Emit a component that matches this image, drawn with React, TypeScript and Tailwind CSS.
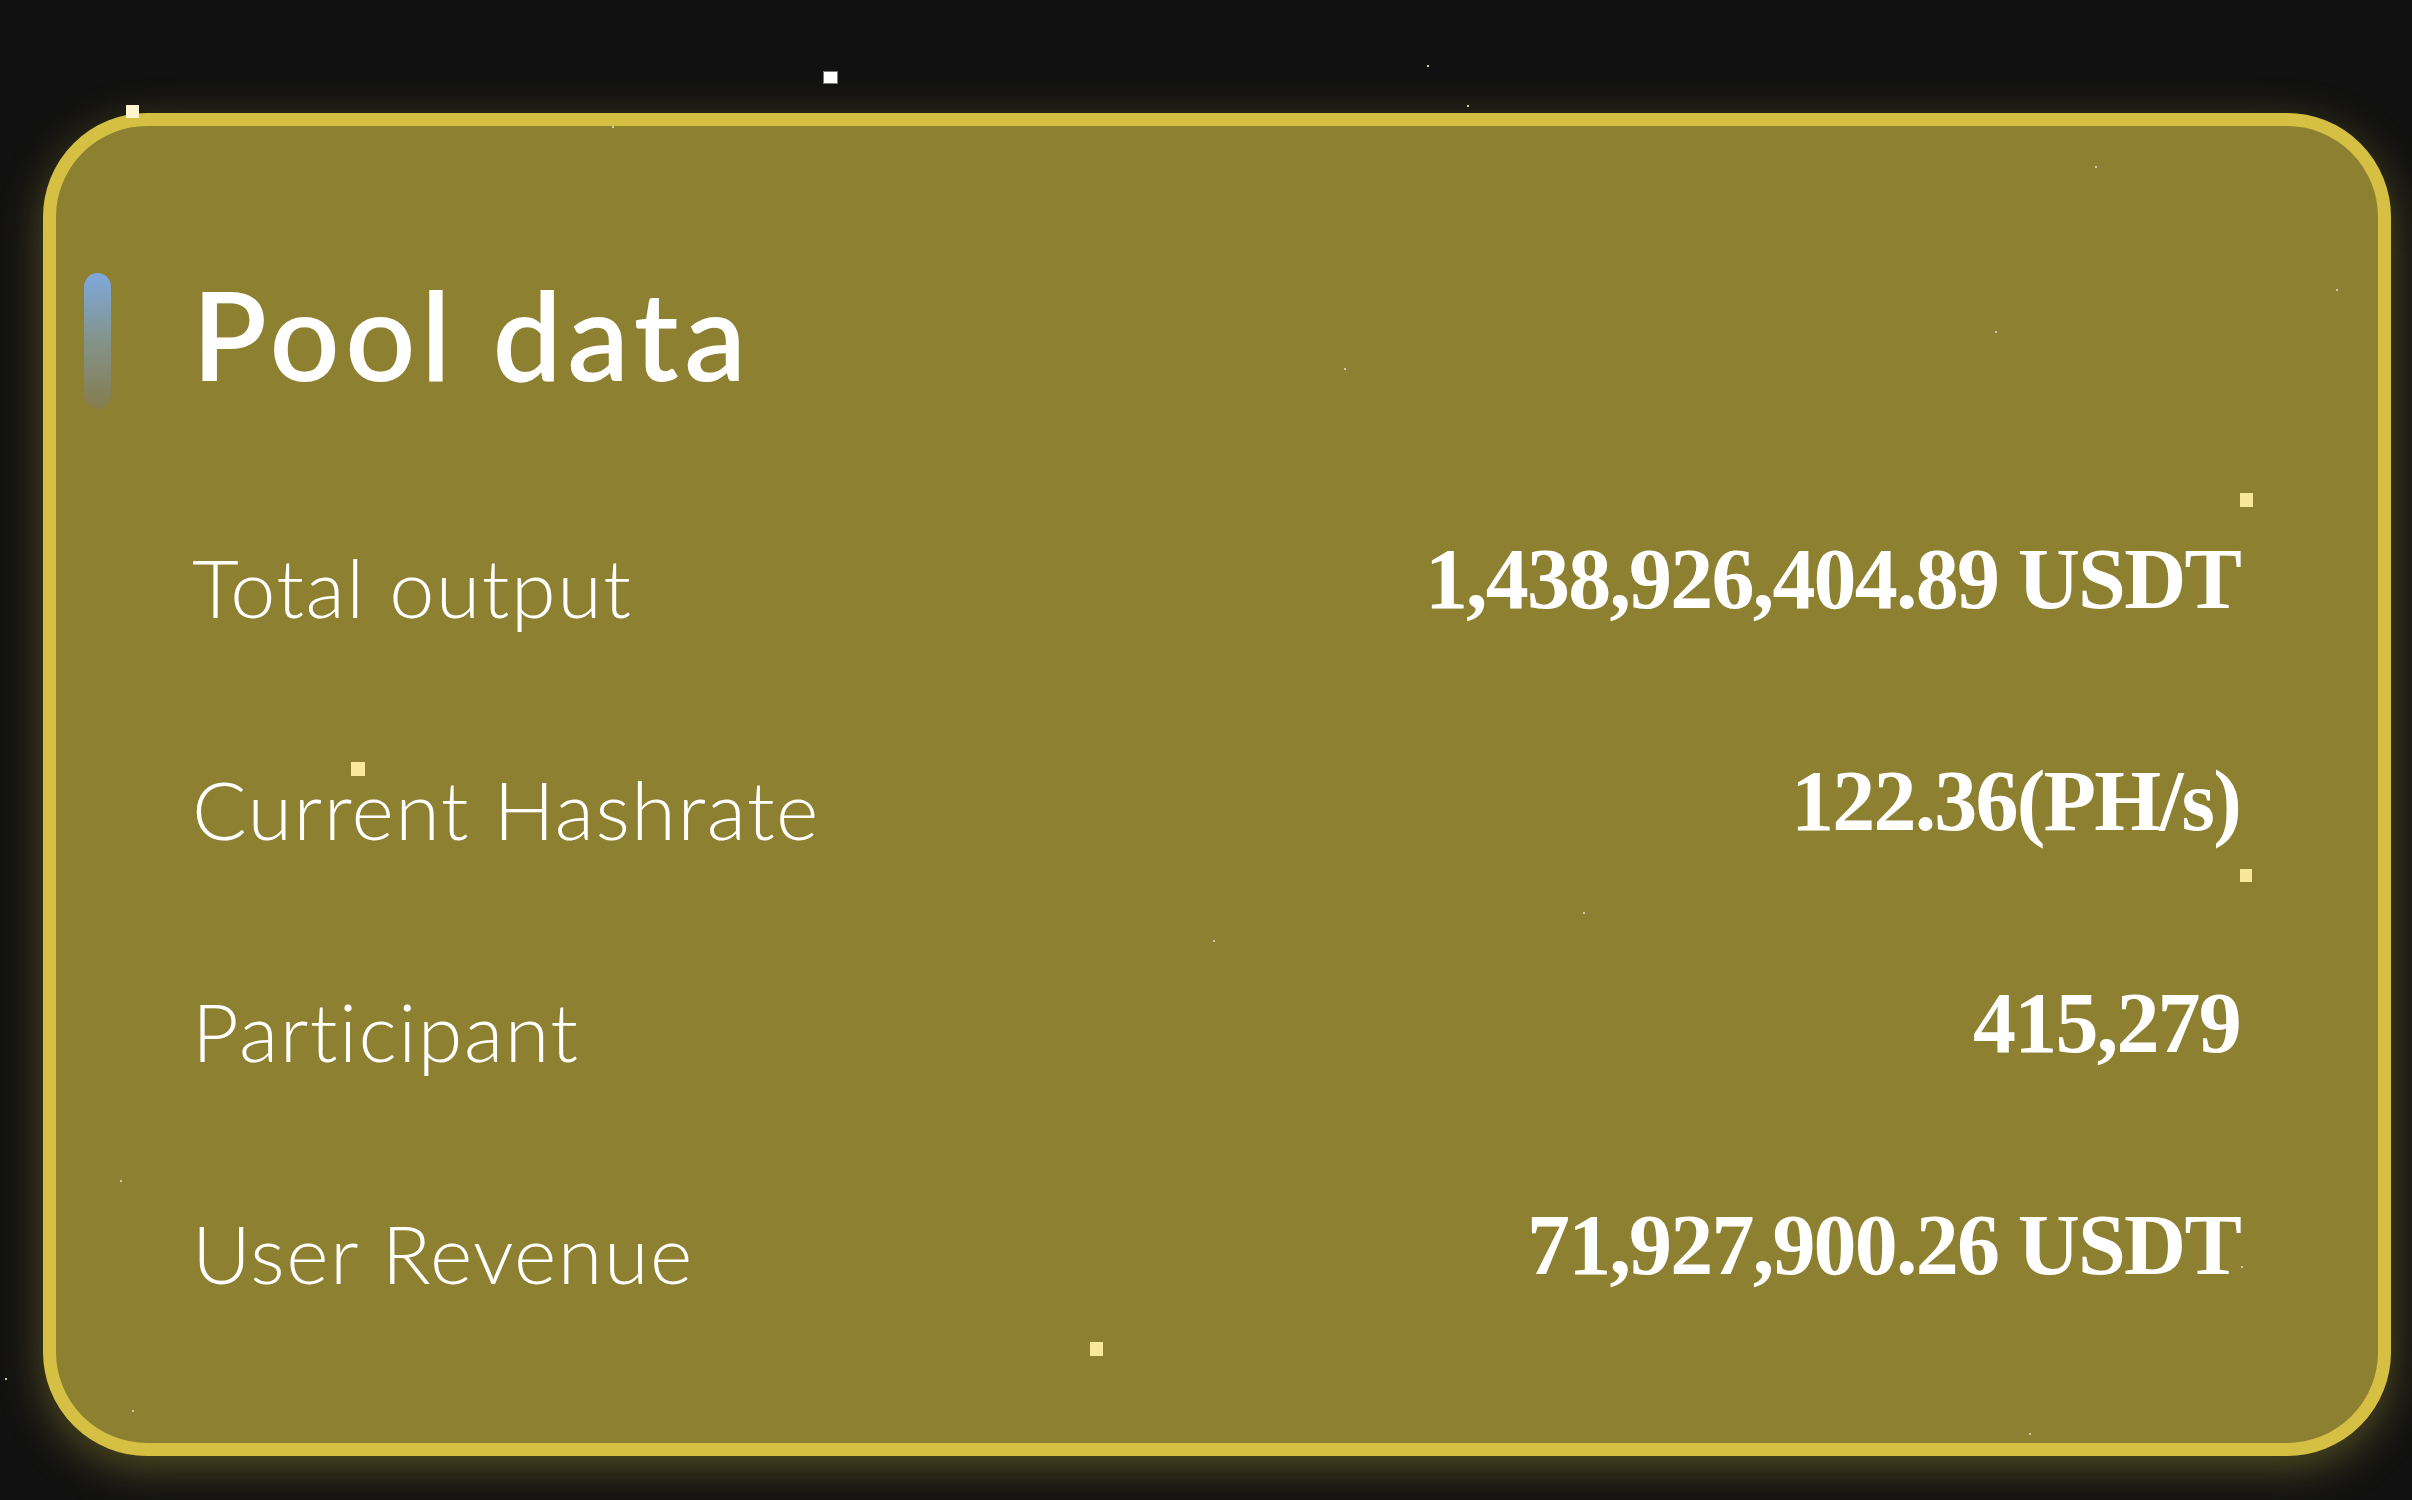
const ROWS = [
  { label: "Total output", value: "1,438,926,404.89 USDT" },
  { label: "Current Hashrate", value: "122.36(PH/s)" },
  { label: "Participant", value: "415,279" },
  { label: "User Revenue", value: "71,927,900.26 USDT" },
];

// little squares scattered over the page
const SPECKS = [
  { x: 823, y: 71, w: 15, h: 13, c: "bg-white border border-[#777]" },
  { x: 126, y: 105, w: 13, h: 13, c: "bg-[#fff6cf]" },
  { x: 2240, y: 493, w: 13, h: 14, c: "bg-[#f7e79a]" },
  { x: 351, y: 762, w: 14, h: 14, c: "bg-[#f9e99c]" },
  { x: 2240, y: 869, w: 12, h: 13, c: "bg-[#f7e79a]" },
  { x: 1090, y: 1342, w: 13, h: 14, c: "bg-[#f9e99c]" },
];

const DOTS = [
  [1427, 65], [1467, 105], [2095, 166], [2336, 289], [1995, 331], [1344, 368],
  [1213, 940], [1583, 912], [120, 1180], [132, 1410], [2029, 1433], [5, 1378],
  [2241, 1266], [612, 126],
];

export default function App() {
  return (
    <div className="relative h-[1500px] w-full overflow-hidden bg-[#111111] pt-[113px] pl-[43px]">
      <div className="box-border h-[1343px] w-[2348px] rounded-[104px] border-[13px] border-[#d5c044] bg-[#8e8031] pt-[146px] shadow-[0_12px_44px_rgba(213,192,68,0.35)]">
        <div className="flex items-start pl-[28px]">
          <div className="mt-[1px] h-[136px] w-[27px] rounded-full bg-gradient-to-b from-[#7ea7dc] via-[#83938a] to-[#857c4c]" />
          <h1 className="ml-[81px] font-['Lato',sans-serif] text-[123px] font-semibold leading-none tracking-[5.5px] text-white">
            Pool data
          </h1>
        </div>

        <div className="mt-[66px] flex flex-col pl-[136px] pr-[138px]">
          {ROWS.map((r) => (
            <div key={r.label} className="flex h-[222px] items-center justify-between">
              <span className="font-['Lato',sans-serif] text-[81px] font-light leading-none tracking-[1.5px] text-white">
                {r.label}
              </span>
              <span className="-mt-[14px] font-['Liberation_Serif','Times_New_Roman',serif] text-[86px] font-bold leading-none tracking-[-1.8px] text-white">
                {r.value}
              </span>
            </div>
          ))}
        </div>
      </div>

      {SPECKS.map((s, i) => (
        <span
          key={i}
          className={`absolute ${s.c}`}
          style={{ left: s.x, top: s.y, width: s.w, height: s.h }}
        />
      ))}
      {DOTS.map(([x, y], i) => (
        <span key={i} className="absolute h-[2px] w-[2px] bg-[#cfc9a0]" style={{ left: x, top: y }} />
      ))}
    </div>
  );
}
